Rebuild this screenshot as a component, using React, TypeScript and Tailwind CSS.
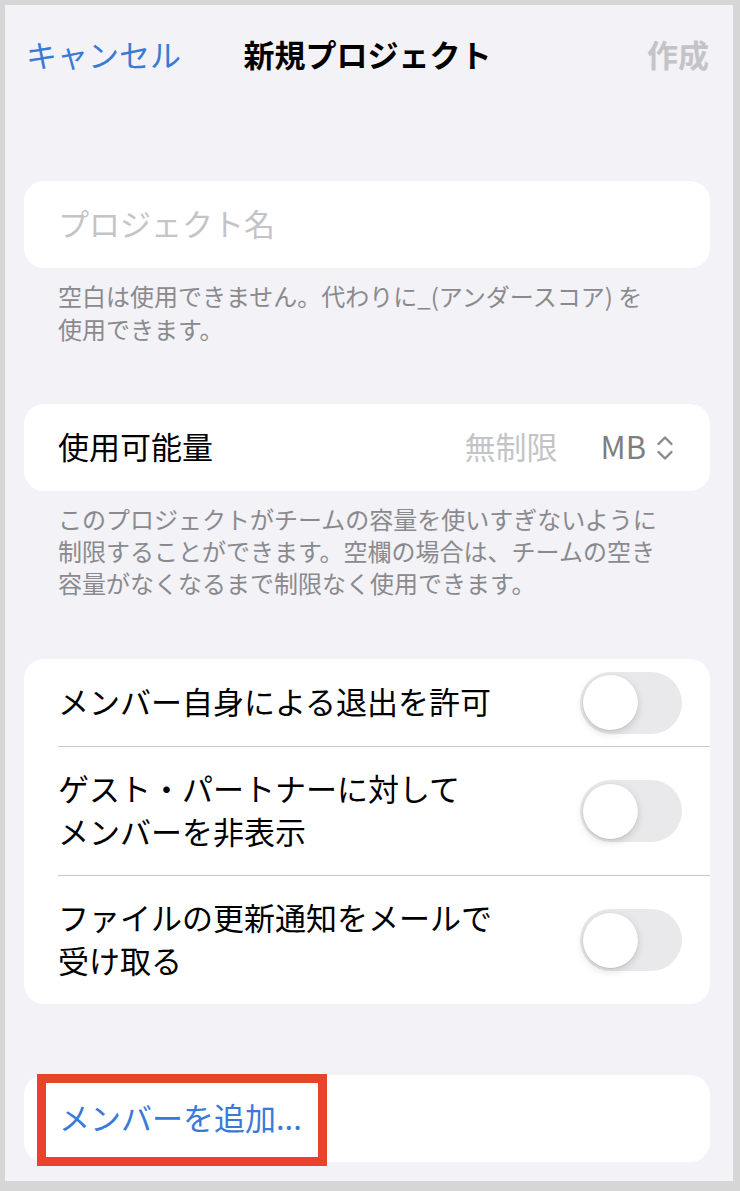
import React from "react";

const FONT = '"Noto Sans CJK JP", "Noto Sans", sans-serif';

function Toggle() {
  return (
    <div className="relative h-[62px] w-[102px] shrink-0 rounded-full bg-[#e9e9eb]">
      <div className="absolute left-[3px] top-[3.5px] h-[55px] w-[55px] rounded-full bg-white shadow-[0_3px_8px_rgba(0,0,0,0.15),0_1px_1px_rgba(0,0,0,0.06),0_0_0_0.5px_rgba(0,0,0,0.04)]" />
    </div>
  );
}

function UpDown() {
  return (
    <svg width="18" height="26" viewBox="0 0 18 26" fill="none" stroke="#8a8a8e" strokeWidth="2.4" strokeLinecap="round" strokeLinejoin="round">
      <polyline points="2.5,9 9,2.5 15.5,9" />
      <polyline points="2.5,17 9,23.5 15.5,17" />
    </svg>
  );
}

export default function App() {
  return (
    <div className="bg-[#d6d6d6] pt-[5px] pl-[5px] pr-[7px] pb-[10px]" style={{ fontFamily: FONT }}>
      <div className="h-[1176px] bg-[#f2f2f7]">
        {/* Nav */}
        <div className="grid h-[100px] grid-cols-[1fr_auto_1fr] items-center pb-[4px] pl-[21px] pr-[24px]">
          <span className="justify-self-start text-[31px] leading-none text-[#3a7ad6]">キャンセル</span>
          <span className="text-[31px] font-bold leading-none text-black">新規プロジェクト</span>
          <span className="justify-self-end text-[31px] font-bold leading-none text-[#c4c4c8]">作成</span>
        </div>

        {/* Card 1 */}
        <div className="ml-[19px] mr-[23px] mt-[76px] flex h-[87px] items-center rounded-[20px] bg-white px-[34px] pb-[4px]">
          <span className="text-[31px] leading-none text-[#c4c4c6]">プロジェクト名</span>
        </div>
        <div className="ml-[19px] mr-[23px] px-[34px] pt-[11px] text-[24px] leading-[33px] text-[#8a8a8e]">
          空白は使用できません。代わりに_(アンダースコア) を<br />使用できます。
        </div>

        {/* Card 2 */}
        <div className="ml-[19px] mr-[23px] mt-[59px] flex h-[87px] items-center rounded-[20px] bg-white pb-[4px] pl-[34px] pr-[36px]">
          <span className="flex-1 text-[31px] leading-none text-black">使用可能量</span>
          <span className="text-[31px] leading-none text-[#c4c4c6]">無制限</span>
          <span className="ml-[43px] text-[31px] leading-none text-[#7e7e82]">MB</span>
          <span className="ml-[10px] flex items-center pt-[4px]">
            <UpDown />
          </span>
        </div>
        <div className="ml-[19px] mr-[23px] px-[34px] pt-[12px] text-[24px] leading-[32px] text-[#8a8a8e]">
          このプロジェクトがチームの容量を使いすぎないように<br />
          制限することができます。空欄の場合は、チームの空き<br />
          容量がなくなるまで制限なく使用できます。
        </div>

        {/* Card 3 */}
        <div className="ml-[19px] mr-[23px] mt-[60px] overflow-hidden rounded-[20px] bg-white">
          <div className="flex h-[87px] items-center pl-[34px] pr-[28px]">
            <span className="-mt-[4px] flex-1 text-[31px] leading-[43px] text-black">メンバー自身による退出を許可</span>
            <Toggle />
          </div>
          <div className="ml-[34px] h-px bg-[#c8c8cc]" />
          <div className="flex h-[128px] items-center pl-[34px] pr-[28px]">
            <span className="-mt-[4px] flex-1 text-[31px] leading-[43px] text-black">
              ゲスト・パートナーに対して<br />メンバーを非表示
            </span>
            <Toggle />
          </div>
          <div className="ml-[34px] h-px bg-[#c8c8cc]" />
          <div className="flex h-[128px] items-center pl-[34px] pr-[28px]">
            <span className="-mt-[4px] flex-1 text-[31px] leading-[43px] text-black">
              ファイルの更新通知をメールで<br />受け取る
            </span>
            <Toggle />
          </div>
        </div>

        {/* Card 4 */}
        <div className="relative ml-[19px] mr-[23px] mt-[71px] flex h-[87px] items-center rounded-[20px] bg-white px-[35px] pb-[4px]">
          <span className="text-[31px] leading-none text-[#3a7ad6]">メンバーを追加...</span>
          <div className="absolute left-[13px] top-[-1px] h-[92px] w-[290px] border-[9px] border-[#e8432b]" />
        </div>
      </div>
    </div>
  );
}
